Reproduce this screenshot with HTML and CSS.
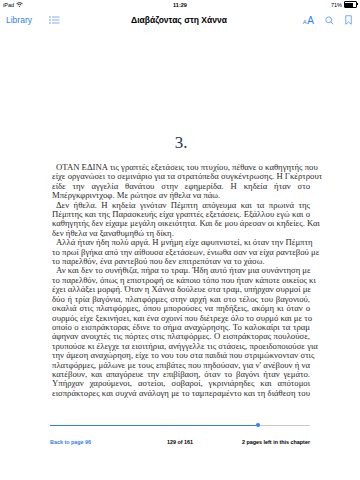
FILE: index.html
```html
<!DOCTYPE html>
<html lang="el">
<head>
    <meta charset="UTF-8">
    <meta name="viewport" content="width=device-width, initial-scale=1.0">
    <title>Διαβάζοντας στη Χάννα</title>
    <link rel="stylesheet" href="styles.css">
</head>
<body>
    <div class="statusbar">
        <div class="status-left">
            iPad
            <svg class="wifi" width="7" height="5" viewBox="0 0 14 10">
                <path d="M1 3.5 A9 9 0 0 1 13 3.5" fill="none" stroke="#000" stroke-width="1.6"/>
                <path d="M3.5 6 A5.5 5.5 0 0 1 10.5 6" fill="none" stroke="#000" stroke-width="1.6"/>
                <path d="M5.6 8.3 A2.2 2.2 0 0 1 8.4 8.3 L7 9.8 Z" fill="#000"/>
            </svg>
        </div>
        <div class="status-time">11:29</div>
        <div class="status-right">
            71%
            <span class="battery"><span class="battery-level"></span></span>
        </div>
    </div>

    <div class="navbar">
        <div class="nav-left">
            <span class="nav-link">Library</span>
            <svg class="icon" width="11" height="8" viewBox="0 0 22 16">
                <circle cx="2" cy="2" r="1.3" fill="#2f7df6"/>
                <circle cx="2" cy="8" r="1.3" fill="#2f7df6"/>
                <circle cx="2" cy="14" r="1.3" fill="#2f7df6"/>
                <path d="M6 2H21M6 8H21M6 14H21" stroke="#2f7df6" stroke-width="1.2"/>
            </svg>
        </div>
        <div class="nav-title">Διαβάζοντας στη Χάννα</div>
        <div class="nav-right">
            <span class="font-size"><span class="a-small">A</span><span class="a-big">A</span></span>
            <svg class="icon" width="9" height="9" viewBox="0 0 18 18">
                <circle cx="7.5" cy="7.5" r="5.8" fill="none" stroke="#2f7df6" stroke-width="1.3"/>
                <path d="M11.6 11.6L16.5 16.5" stroke="#2f7df6" stroke-width="1.4"/>
            </svg>
            <svg class="icon" width="7" height="10" viewBox="0 0 14 20">
                <path d="M1.5 1.5H12.5V18.5L7 14L1.5 18.5Z" fill="none" stroke="#2f7df6" stroke-width="1.3" stroke-linejoin="round"/>
            </svg>
        </div>
    </div>

    <div class="page">
        <h1 class="chapter">3.</h1>

        <div class="text">
            <div class="para">
                <span class="ln first">ΟΤΑΝ ΕΔΙΝΑ τις γραπτές εξετάσεις του πτυχίου, πέθανε ο καθηγητής που</span>
                <span class="ln">είχε οργανώσει το σεμινάριο για τα στρατόπεδα συγκέντρωσης. Η Γκέρτρουτ</span>
                <span class="ln">είδε την αγγελία θανάτου στην εφημερίδα. Η κηδεία ήταν στο</span>
                <span class="ln end">Μπέργκφριντχοφ. Με ρώτησε αν ήθελα να πάω.</span>
            </div>
            <div class="para">
                <span class="ln first">Δεν ήθελα. Η κηδεία γινόταν Πέμπτη απόγευμα και τα πρωινά της</span>
                <span class="ln">Πέμπτης και της Παρασκευής είχα γραπτές εξετάσεις. Εξάλλου εγώ και ο</span>
                <span class="ln">καθηγητής δεν είχαμε μεγάλη οικειότητα. Και δε μου άρεσαν οι κηδείες. Και</span>
                <span class="ln end">δεν ήθελα να ξαναθυμηθώ τη δίκη.</span>
            </div>
            <div class="para">
                <span class="ln first">Αλλά ήταν ήδη πολύ αργά. Η μνήμη είχε αφυπνιστεί, κι όταν την Πέμπτη</span>
                <span class="ln">το πρωί βγήκα από την αίθουσα εξετάσεων, ένιωθα σαν να είχα ραντεβού με</span>
                <span class="ln end">το παρελθόν, ένα ραντεβού που δεν επιτρεπόταν να το χάσω.</span>
            </div>
            <div class="para">
                <span class="ln first">Αν και δεν το συνήθιζα, πήρα το τραμ. Ήδη αυτό ήταν μια συνάντηση με</span>
                <span class="ln">το παρελθόν, όπως η επιστροφή σε κάποιο τόπο που ήταν κάποτε οικείος κι</span>
                <span class="ln">έχει αλλάξει μορφή. Όταν η Χάννα δούλευε στα τραμ, υπήρχαν συρμοί με</span>
                <span class="ln">δύο ή τρία βαγόνια, πλατφόρμες στην αρχή και στο τέλος του βαγονιού,</span>
                <span class="ln">σκαλιά στις πλατφόρμες, όπου μπορούσες να πηδήξεις, ακόμη κι όταν ο</span>
                <span class="ln">συρμός είχε ξεκινήσει, και ένα σχοινί που διέτρεχε όλο το συρμό και με το</span>
                <span class="ln">οποίο ο εισπράκτορας έδινε το σήμα αναχώρησης. Το καλοκαίρι τα τραμ</span>
                <span class="ln">άφηναν ανοιχτές τις πόρτες στις πλατφόρμες. Ο εισπράκτορας πουλούσε,</span>
                <span class="ln">τρυπούσε κι έλεγχε τα εισιτήρια, ανήγγελλε τις στάσεις, προειδοποιούσε για</span>
                <span class="ln">την άμεση αναχώρηση, είχε το νου του στα παιδιά που στριμώκνονταν στις</span>
                <span class="ln">πλατφόρμες, μάλωνε με τους επιβάτες που πηδούσαν, για ν' ανέβουν ή να</span>
                <span class="ln">κατέβουν, και απαγόρευε την επιβίβαση, όταν το βαγόνι ήταν γεμάτο.</span>
                <span class="ln">Υπήρχαν χαρούμενοι, αστείοι, σοβαροί, γκρινιάρηδες και απότομοι</span>
                <span class="ln">εισπράκτορες και συχνά ανάλογη με το ταμπεραμέντο και τη διάθεση του</span>
            </div>
        </div>
    </div>

    <div class="footer">
        <div class="slider">
            <div class="slider-done"></div>
            <div class="slider-thumb"></div>
            <div class="slider-rest"></div>
        </div>
        <div class="footer-labels">
            <span class="back">Back to page 96</span>
            <span class="count">129 of 161</span>
            <span class="left">2 pages left in this chapter</span>
        </div>
    </div>
</body>
</html>
```

FILE: styles.css
```css
body {
    margin: 0;
    width: 360px;
    height: 480px;
    background: #fff;
    font-family: 'Liberation Sans', Arial, sans-serif;
    color: #000;
    overflow: hidden;
}
.statusbar {
    height: 9px;
    padding: 0 3px;
    display: flex;
    align-items: center;
    justify-content: space-between;
    font-size: 5.5px;
}
.status-left, .status-right {
    width: 60px;
    display: flex;
    align-items: center;
    gap: 2px;
}
.status-right {
    justify-content: flex-end;
}
.status-time {
    font-weight: bold;
}
.battery {
    width: 10px;
    height: 4px;
    border: 0.7px solid #000;
    border-radius: 1px;
    padding: 0.5px;
    display: flex;
    position: relative;
}
.battery::after {
    content: "";
    position: absolute;
    right: -2px;
    top: 1px;
    width: 1px;
    height: 2px;
    background: #000;
}
.battery-level {
    width: 71%;
    background: #000;
}
.navbar {
    height: 22px;
    padding: 0 8px 0 6px;
    display: flex;
    align-items: center;
    justify-content: space-between;
}
.nav-left, .nav-right {
    width: 80px;
    display: flex;
    align-items: center;
}
.nav-left {
    gap: 17px;
}
.nav-right {
    justify-content: flex-end;
    gap: 11px;
}
.nav-link {
    color: #2f7df6;
    font-size: 8.5px;
}
.nav-title {
    font-size: 8.5px;
    font-weight: bold;
}
.font-size {
    color: #2f7df6;
    display: flex;
    align-items: baseline;
    gap: 0.5px;
}
.a-small {
    font-size: 6px;
}
.a-big {
    font-size: 10px;
}
.page {
    padding: 0 50px 0 52px;
}
.chapter {
    margin: 102px 0 0;
    font-family: 'Liberation Serif', 'Times New Roman', serif;
    font-weight: normal;
    font-size: 17px;
    line-height: 20px;
    text-align: center;
    color: #1f3853;
}
.text {
    margin-top: 10px;
    font-family: 'Liberation Serif', 'Times New Roman', serif;
    font-size: 8.7px;
    line-height: 9.4px;
    color: #2b2b2b;
}
.ln {
    display: block;
    white-space: nowrap;
    text-align: justify;
    text-align-last: justify;
}
.ln.first {
    padding-left: 4px;
}
.ln.end {
    text-align-last: left;
}
.footer {
    margin-top: 25px;
    padding: 0 50px;
}
.slider {
    height: 4px;
    display: flex;
    align-items: center;
}
.slider-done {
    width: 206px;
    height: 1px;
    background: #2f7df6;
}
.slider-thumb {
    width: 4px;
    height: 4px;
    border-radius: 50%;
    background: #2f7df6;
}
.slider-rest {
    flex: 1;
    height: 1px;
    background: #c9c9c9;
}
.footer-labels {
    margin-top: 12px;
    display: flex;
    justify-content: space-between;
    font-size: 5.4px;
    font-weight: bold;
}
.back {
    color: #2f7df6;
    width: 72px;
}
.left {
    width: 72px;
    text-align: right;
}
```
